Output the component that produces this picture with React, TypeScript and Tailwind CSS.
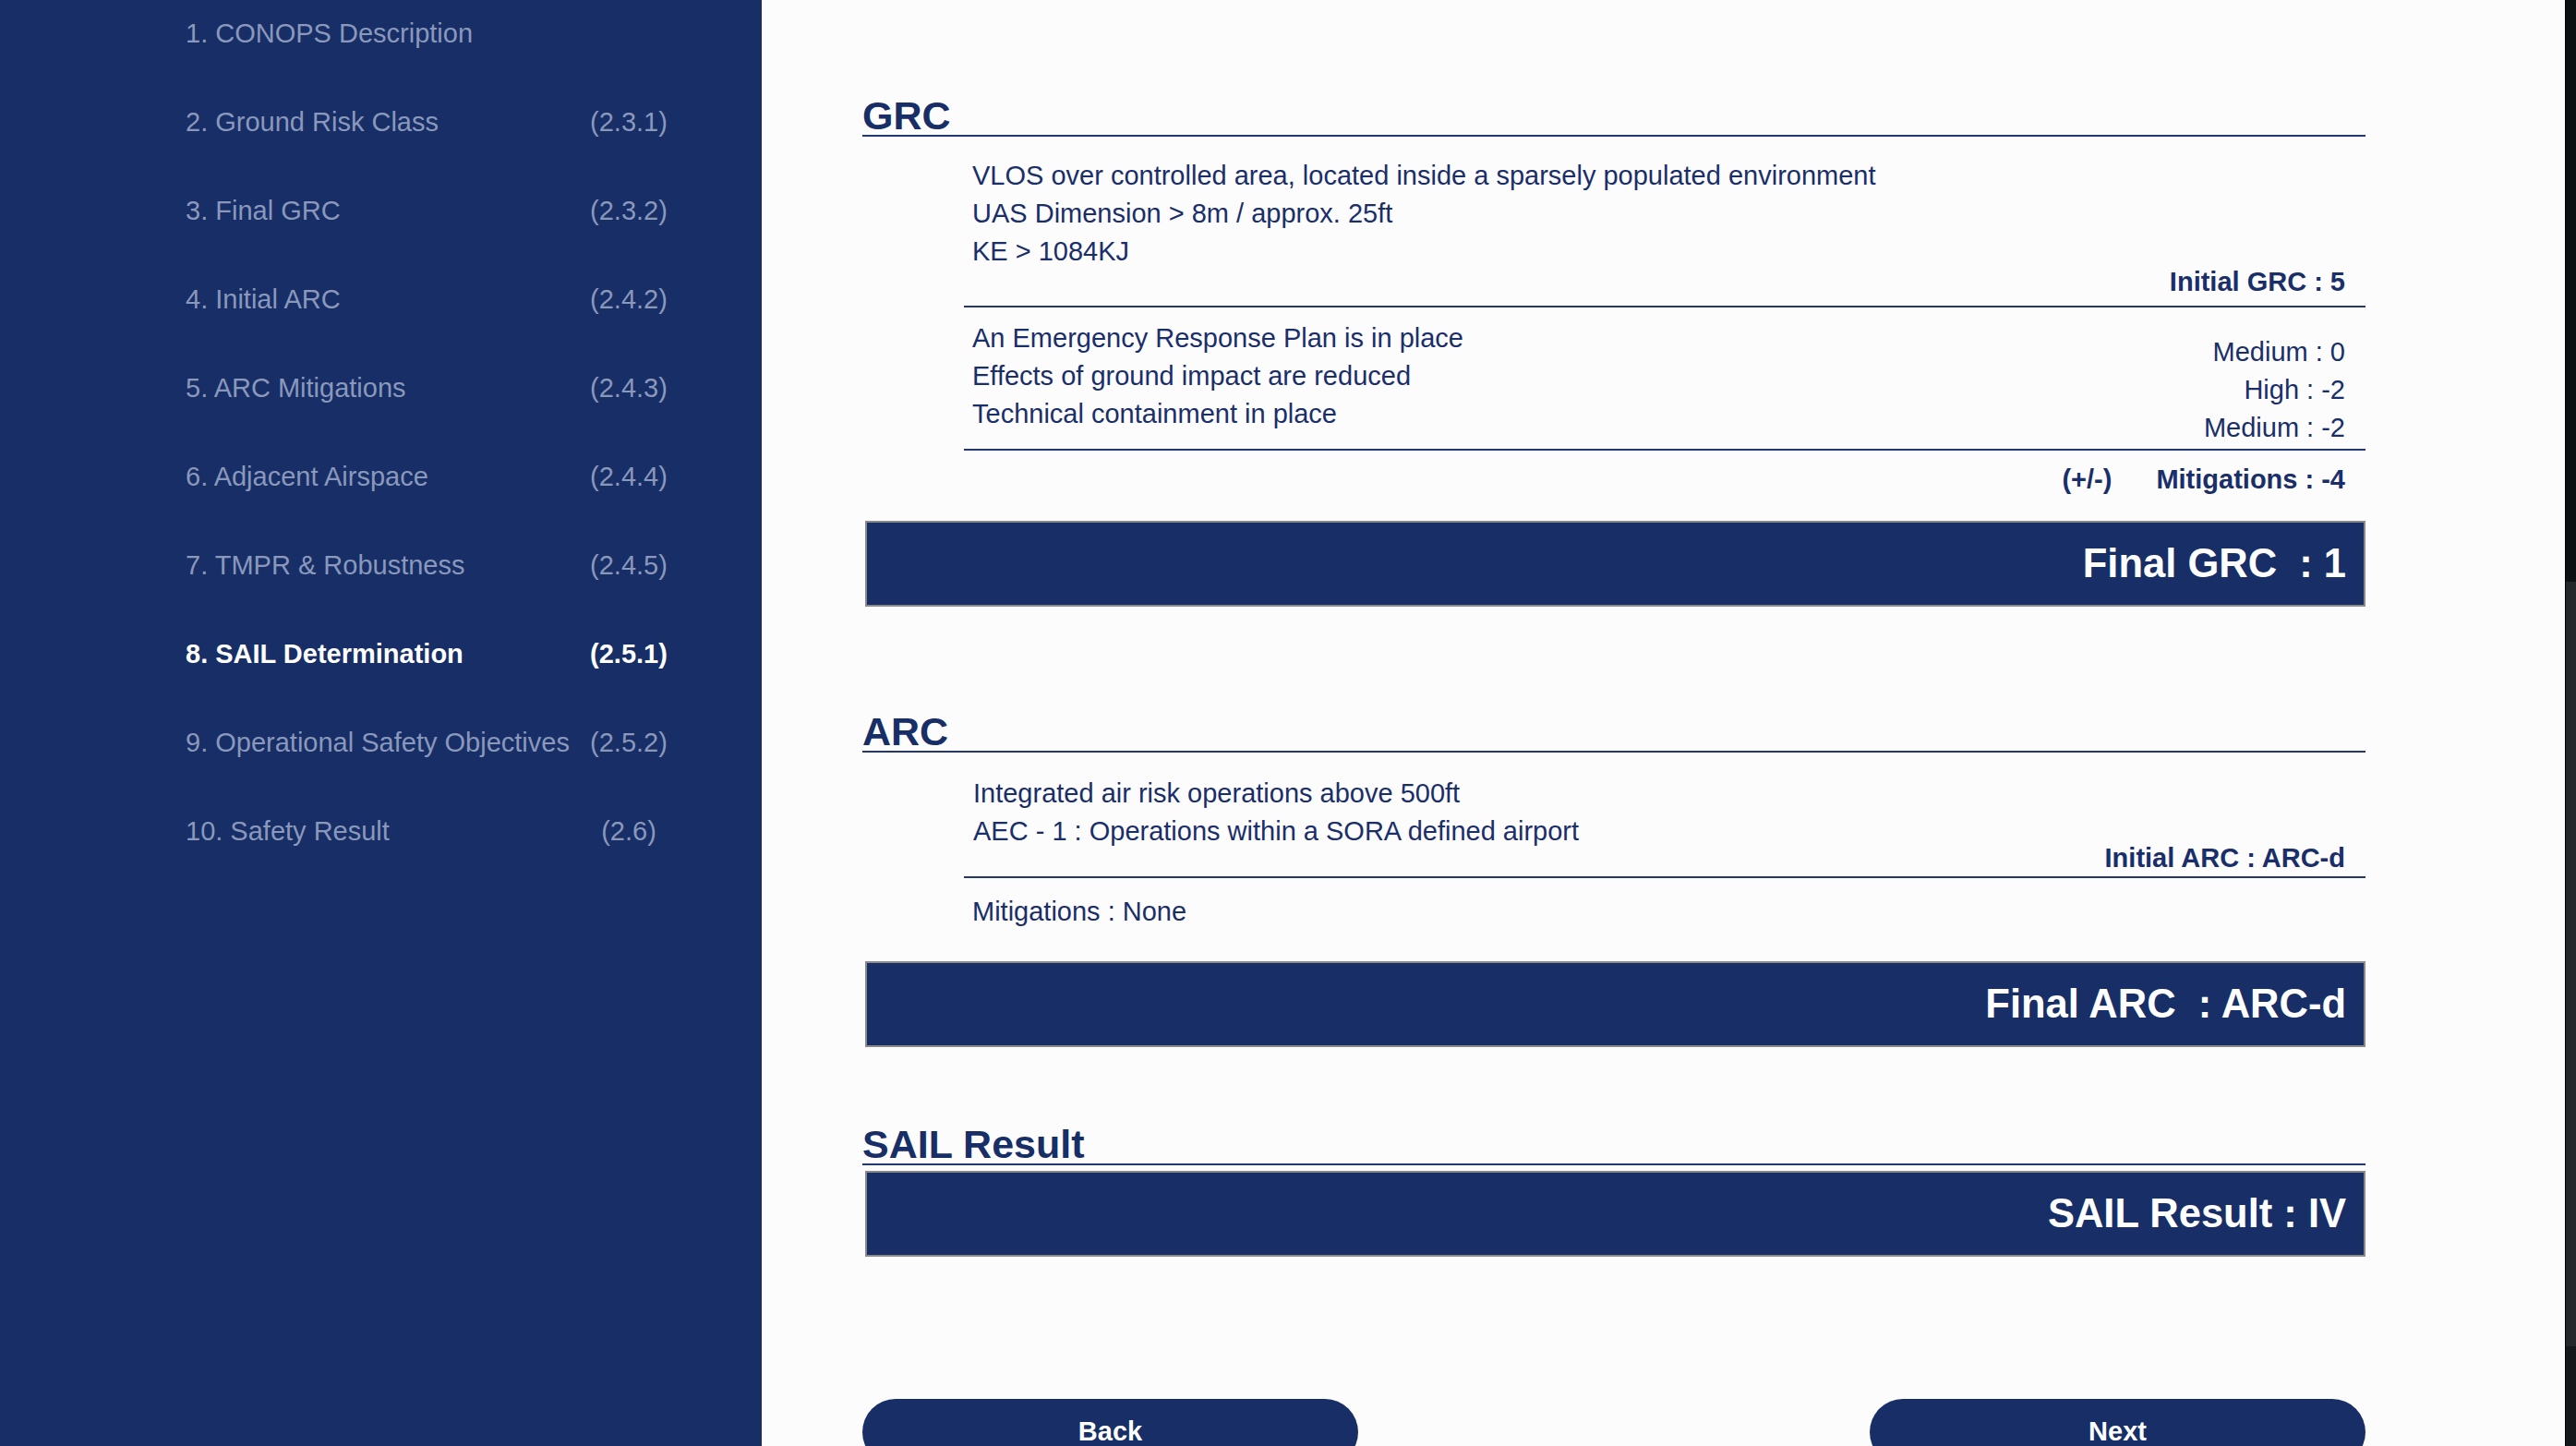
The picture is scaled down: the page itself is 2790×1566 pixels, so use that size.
const navItems = [
  { label: '1. CONOPS Description', code: '' },
  { label: '2. Ground Risk Class', code: '(2.3.1)' },
  { label: '3. Final GRC', code: '(2.3.2)' },
  { label: '4. Initial ARC', code: '(2.4.2)' },
  { label: '5. ARC Mitigations', code: '(2.4.3)' },
  { label: '6. Adjacent Airspace', code: '(2.4.4)' },
  { label: '7. TMPR & Robustness', code: '(2.4.5)' },
  { label: '8. SAIL Determination', code: '(2.5.1)', active: true },
  { label: '9. Operational Safety Objectives', code: '(2.5.2)' },
  { label: '10. Safety Result', code: '(2.6)' },
];

function SectionHeading({ title }: { title: string }) {
  return (
    <h2 className="border-b-2 border-[#22386f] text-[43px] leading-[42px] font-bold text-[#172e67]">
      {title}
    </h2>
  );
}

function ResultBox({ text }: { text: string }) {
  return (
    <div className="ml-[3px] flex h-[93px] items-center justify-end border-2 border-[#8a8a8a] bg-[#172e66] pr-[19px]">
      <span className="text-[43.5px] font-bold whitespace-pre text-white">{text}</span>
    </div>
  );
}

export default function App() {
  return (
    <div
      className="flex h-[1566px] w-[2790px] overflow-hidden bg-[#fcfcfc]"
      style={{ fontFamily: '"Liberation Sans", Arial, sans-serif' }}
    >
      {/* sidebar */}
      <aside className="flex w-[825px] shrink-0 flex-col gap-[60px] bg-[#172e67] pt-[18px] pl-[201px]">
        {navItems.map((item) => (
          <div
            key={item.label}
            className={
              item.active
                ? 'flex text-[29px] leading-[36px] font-bold text-white'
                : 'flex text-[29px] leading-[36px] text-[#8a98bb]'
            }
          >
            <span className="w-[435px]">{item.label}</span>
            <span className="w-[90px] text-center">{item.code}</span>
          </div>
        ))}
      </aside>

      {/* main */}
      <main className="flex-1 pt-[104px] pl-[109px]">
        <div className="w-[1628px] text-[29px] text-[#1a2e69]">
          {/* GRC */}
          <SectionHeading title="GRC" />
          <div className="ml-[110px]">
            <div className="border-b-2 border-[#22386f] pt-[22px] pr-[22px] pb-[13px] pl-[9px]">
              <div className="leading-[41px]">
                <p>VLOS over controlled area, located inside a sparsely populated environment</p>
                <p>UAS Dimension &gt; 8m / approx. 25ft</p>
                <p>KE &gt; 1084KJ</p>
              </div>
              <p className="text-right leading-[25px] font-bold">Initial GRC : 5</p>
            </div>
            <div className="flex items-start justify-between border-b-2 border-[#22386f] pr-[22px] pb-[2px] pl-[9px] leading-[41px]">
              <div className="pt-[13px]">
                <p>An Emergency Response Plan is in place</p>
                <p>Effects of ground impact are reduced</p>
                <p>Technical containment in place</p>
              </div>
              <div className="pt-[28px] text-right">
                <p>Medium : 0</p>
                <p>High : -2</p>
                <p>Medium : -2</p>
              </div>
            </div>
            <div className="flex justify-end gap-[48px] pt-[17px] pr-[22px] leading-[28px] font-bold">
              <span>(+/-)</span>
              <span>Mitigations : -4</span>
            </div>
          </div>
          <div className="mt-[31px]">
            <ResultBox text="Final GRC  : 1" />
          </div>

          {/* ARC */}
          <div className="mt-[114px]">
            <SectionHeading title="ARC" />
          </div>
          <div className="ml-[110px]">
            <div className="border-b-2 border-[#22386f] pt-[24px] pr-[22px] pb-[12px] pl-[10px]">
              <div className="leading-[41px]">
                <p>Integrated air risk operations above 500ft</p>
                <p>AEC - 1 : Operations within a SORA defined airport</p>
              </div>
              <p className="text-right leading-[16px] font-bold">Initial ARC : ARC-d</p>
            </div>
            <p className="pt-[16px] pl-[9px] leading-[41px]">Mitigations : None</p>
          </div>
          <div className="mt-[33px]">
            <ResultBox text="Final ARC  : ARC-d" />
          </div>

          {/* SAIL */}
          <div className="mt-[84px]">
            <SectionHeading title="SAIL Result" />
          </div>
          <div className="mt-[6px]">
            <ResultBox text="SAIL Result : IV" />
          </div>

          <div className="mt-[154px] flex justify-between">
            <button className="h-[72px] w-[537px] rounded-full bg-[#172e66] text-[29px] font-bold text-white">
              Back
            </button>
            <button className="h-[72px] w-[537px] rounded-full bg-[#172e66] text-[29px] font-bold text-white">
              Next
            </button>
          </div>
        </div>
      </main>

      {/* scrollbar */}
      <div className="flex w-[12px] shrink-0 flex-col border-l border-black">
        <div className="h-[630px] bg-[#0d1013]" />
        <div className="h-[828px] bg-[#25282b]" />
        <div className="flex-1 bg-[#15181b]" />
      </div>
    </div>
  );
}
